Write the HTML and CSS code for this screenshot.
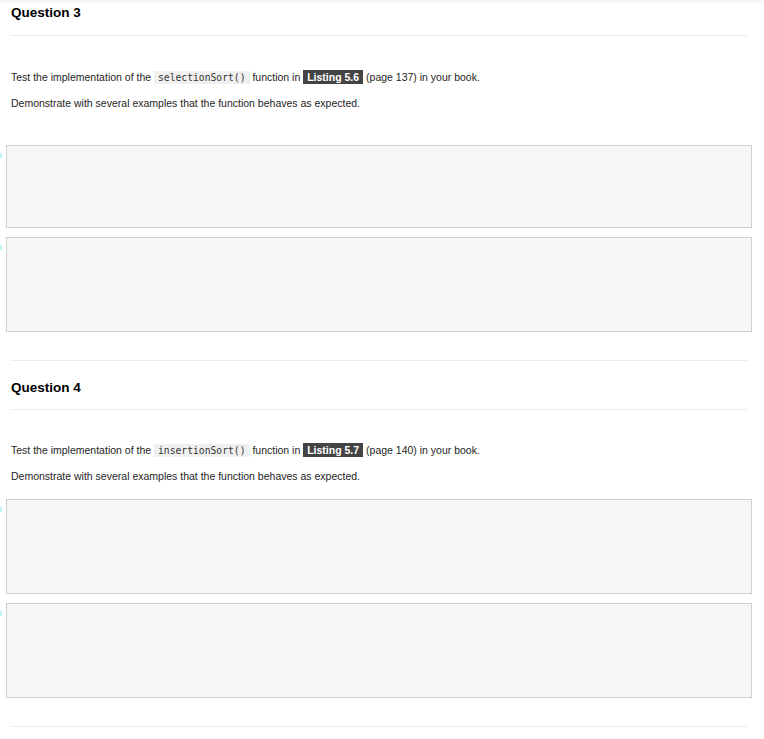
FILE: index.html
```html
<!DOCTYPE html>
<html lang="en">
<head>
    <meta charset="UTF-8">
    <meta name="viewport" content="width=device-width, initial-scale=1.0">
    <title>Sorting Exercises</title>
    <link rel="stylesheet" href="styles.css">
</head>
<body>
    <div class="top-shade"></div>

    <main class="notebook">
        <section class="question first">
            <h2 class="question-title">Question 3</h2>
            <p>Test the implementation of the <code>selectionSort()</code> function in <span class="listing">Listing 5.6</span> (page 137) in your book.</p>
            <p>Demonstrate with several examples that the function behaves as expected.</p>

            <div class="cell cell-short"></div>
            <div class="cell"></div>
        </section>

        <section class="question">
            <h2 class="question-title">Question 4</h2>
            <p>Test the implementation of the <code>insertionSort()</code> function in <span class="listing">Listing 5.7</span> (page 140) in your book.</p>
            <p>Demonstrate with several examples that the function behaves as expected.</p>

            <div class="cell"></div>
            <div class="cell"></div>
        </section>

        <section class="question"></section>
    </main>
</body>
</html>
```

FILE: styles.css
```css
:root {
    --text-color: #1e1e1e;
    --rule-color: #ececec;
    --cell-bg: #f6f6f6;
    --cell-border: #cfcfcf;
    --code-bg: #f0f0f0;
    --listing-bg: #444;
}

* {
    margin: 0;
    padding: 0;
    box-sizing: border-box;
}

body {
    font-family: 'Liberation Sans', Arial, sans-serif;
    color: var(--text-color);
    background: #fff;
}

.top-shade {
    height: 4px;
    background: linear-gradient(#f1f1f1, #fff);
}

.notebook {
    padding: 0 17px 0 10px;
    margin-top: -4px;
}

.question {
    border-top: 1px solid var(--rule-color);
}

.question.first {
    border-top: none;
}

.question-title {
    font-size: 13.5px;
    font-weight: bold;
    line-height: 16px;
    color: #000;
    padding: 0 0 13px 1px;
    margin-top: 19px;
    border-bottom: 1px solid var(--rule-color);
}

.question.first .question-title {
    margin-top: 5px;
    padding-bottom: 14px;
}

p {
    font-size: 10.5px;
    line-height: 14px;
    padding-left: 1px;
    margin-top: 11px;
}

.question-title + p {
    margin-top: 33px;
}

.question.first .question-title + p {
    margin-top: 34px;
}

code {
    font-family: 'DejaVu Sans Mono', monospace;
    font-size: 9.7px;
    font-weight: normal;
    color: #333;
    background: var(--code-bg);
    padding: 1px 4px;
}

.listing {
    background: var(--listing-bg);
    color: #fff;
    font-weight: bold;
    padding: 1px 4px;
}

.cell {
    position: relative;
    height: 95px;
    margin: 9px -5px 0 -4px;
    background: var(--cell-bg);
    border: 1px solid var(--cell-border);
}

.cell::before {
    content: "";
    position: absolute;
    left: -7px;
    top: 7px;
    width: 2px;
    height: 5px;
    background: #bdf4f8;
}

p + .cell {
    margin-top: 16px;
}

p + .cell-short {
    margin-top: 35px;
    height: 83px;
}

.cell:last-child {
    margin-bottom: 28px;
}
```
